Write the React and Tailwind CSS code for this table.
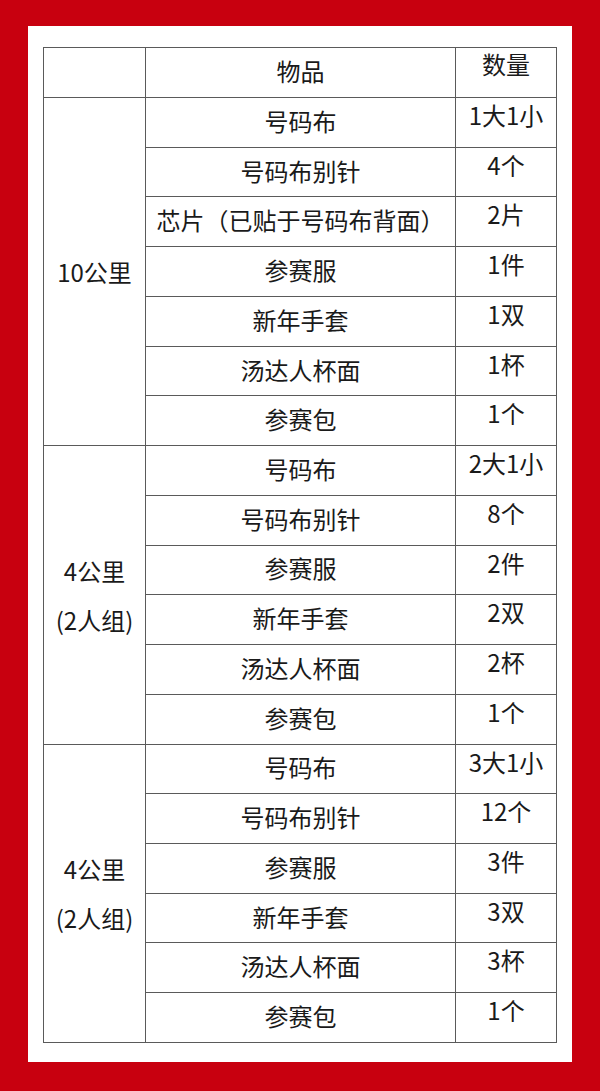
import React from "react";

const groups = [
  {
    label: ["10公里"],
    rows: [
      ["号码布", "1大1小"],
      ["号码布别针", "4个"],
      ["芯片（已贴于号码布背面）", "2片"],
      ["参赛服", "1件"],
      ["新年手套", "1双"],
      ["汤达人杯面", "1杯"],
      ["参赛包", "1个"],
    ],
  },
  {
    label: ["4公里", "(2人组)"],
    rows: [
      ["号码布", "2大1小"],
      ["号码布别针", "8个"],
      ["参赛服", "2件"],
      ["新年手套", "2双"],
      ["汤达人杯面", "2杯"],
      ["参赛包", "1个"],
    ],
  },
  {
    label: ["4公里", "(2人组)"],
    rows: [
      ["号码布", "3大1小"],
      ["号码布别针", "12个"],
      ["参赛服", "3件"],
      ["新年手套", "3双"],
      ["汤达人杯面", "3杯"],
      ["参赛包", "1个"],
    ],
  },
];

const cell = "border border-[#5a5a5a] p-0 align-middle text-center";

export default function App() {
  return (
    <div
      className="w-[600px] h-[1091px] bg-[#c8000f] pt-[26px] pl-[28px] pr-[28px] pb-[29px] text-[#1a1a1a]"
      style={{ fontFamily: '"Noto Sans CJK SC", "Noto Sans", sans-serif' }}
    >
      <div className="w-[544px] h-[1036px] bg-white pt-[21px] pl-[15px]">
        <table className="border-collapse table-fixed w-[513px] text-[24px]">
          <colgroup>
            <col className="w-[102px]" />
            <col className="w-[310px]" />
            <col className="w-[101px]" />
          </colgroup>
          <tbody>
            <tr className="h-[50px]">
              <td className={cell}></td>
              <td className={cell}>
                <span className="block leading-[28px] pb-[3px]">物品</span>
              </td>
              <td className={cell + " !align-top"}>
                <span className="block leading-[28px] pt-[2px]">数量</span>
              </td>
            </tr>
            {groups.map((g, gi) =>
              g.rows.map((r, ri) => (
                <tr key={gi + "-" + ri} className="h-[49.74px]">
                  {ri === 0 && (
                    <td className={cell} rowSpan={g.rows.length}>
                      {g.label.map((l, li) => (
                        <span key={li} className="block leading-[49px]">
                          {l}
                        </span>
                      ))}
                    </td>
                  )}
                  <td className={cell}>
                    <span className="block leading-[28px] pb-[3px]">{r[0]}</span>
                  </td>
                  <td className={cell + " !align-top"}>
                    <span className="block leading-[28px] pt-[3px]">{r[1]}</span>
                  </td>
                </tr>
              ))
            )}
          </tbody>
        </table>
      </div>
    </div>
  );
}
